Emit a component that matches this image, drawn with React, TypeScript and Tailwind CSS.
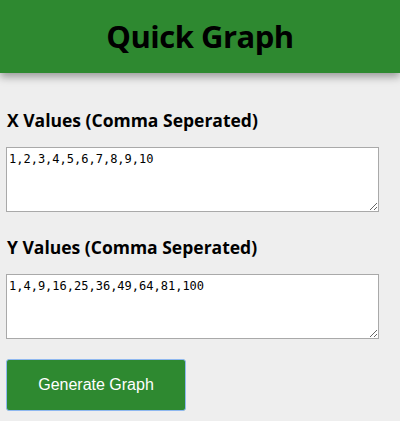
import React from 'react';

export default function App() {
  return (
    <div className="min-h-[421px] bg-[#eeeeee] font-['Open_Sans',sans-serif]">
      <header className="relative z-10 flex h-[73px] items-center justify-center bg-[#2e8930] shadow-[0_4px_8px_rgba(0,0,0,0.35)]">
        <h1 className="text-[31px] font-bold tracking-[-0.5px] text-black">Quick Graph</h1>
      </header>

      <main className="px-[6px]">
        <h2 className="mt-[35px] pl-px text-[17.5px] leading-[24px] font-bold text-black">X Values (Comma Seperated)</h2>
        <textarea
          defaultValue="1,2,3,4,5,6,7,8,9,10"
          className="mt-[15px] block h-[65px] w-[373px] resize-y border border-[#a9a9a9] bg-white px-[2px] py-[3px] font-['DejaVu_Sans_Mono',monospace] text-[12px] leading-[16px] text-black"
        />

        <h2 className="mt-[23px] pl-px text-[17.5px] leading-[24px] font-bold text-black">Y Values (Comma Seperated)</h2>
        <textarea
          defaultValue="1,4,9,16,25,36,49,64,81,100"
          className="mt-[15px] block h-[65px] w-[373px] resize-y border border-[#a9a9a9] bg-white px-[2px] py-[3px] font-['DejaVu_Sans_Mono',monospace] text-[12px] leading-[16px] text-black"
        />

        <button className="mt-[20px] flex h-[52px] w-[180px] items-center justify-center rounded-[3px] border border-[#8fb8f0] bg-[#2e8930] font-['Liberation_Sans',sans-serif] text-[16px] text-white">
          Generate Graph
        </button>
      </main>
    </div>
  );
}
